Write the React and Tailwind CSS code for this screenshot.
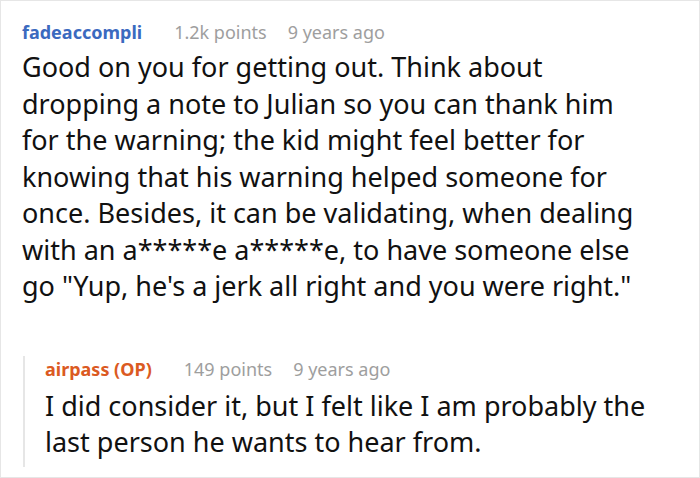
const body = [
  'Good on you for getting out. Think about',
  'dropping a note to Julian so you can thank him',
  'for the warning; the kid might feel better for',
  'knowing that his warning helped someone for',
  'once. Besides, it can be validating, when dealing',
  'with an a*****e a*****e, to have someone else',
  'go "Yup, he\'s a jerk all right and you were right."',
];

const reply = [
  'I did consider it, but I felt like I am probably the',
  'last person he wants to hear from.',
];

function Meta({ name, color, points }) {
  return (
    <div className="flex items-baseline text-[18px] leading-[26px]">
      <span className={`font-bold mr-[32px] ${color}`}>{name}</span>
      <span className="text-[#9e9e9e] mr-[21px]">{points}</span>
      <span className="text-[#9e9e9e]">9 years ago</span>
    </div>
  );
}

export default function App() {
  return (
    <div className="w-[700px] h-[478px] bg-white border border-[#e6e6e6] overflow-hidden" style={{ fontFamily: '"Noto Sans", "Open Sans", sans-serif' }}>
      <div className="pl-[21px] pt-[18px]">
        <Meta name="fadeaccompli" color="text-[#3b6abf]" points="1.2k points" />
        <div className="mt-[4px] text-[27px] leading-[36.5px] text-[#111]">
          {body.map((l) => (
            <div key={l} className="whitespace-nowrap">{l}</div>
          ))}
        </div>
        <div className="mt-[71px] ml-[1px] border-l-2 border-[#e6e6e6] pl-[20px] pb-[6px]">
          <div className="-mt-[20px]">
            <Meta name="airpass (OP)" color="text-[#db5a22]" points="149 points" />
          </div>
          <div className="mt-[6px] text-[27px] leading-[36.5px] text-[#111]">
            {reply.map((l) => (
              <div key={l} className="whitespace-nowrap">{l}</div>
            ))}
          </div>
        </div>
      </div>
    </div>
  );
}
